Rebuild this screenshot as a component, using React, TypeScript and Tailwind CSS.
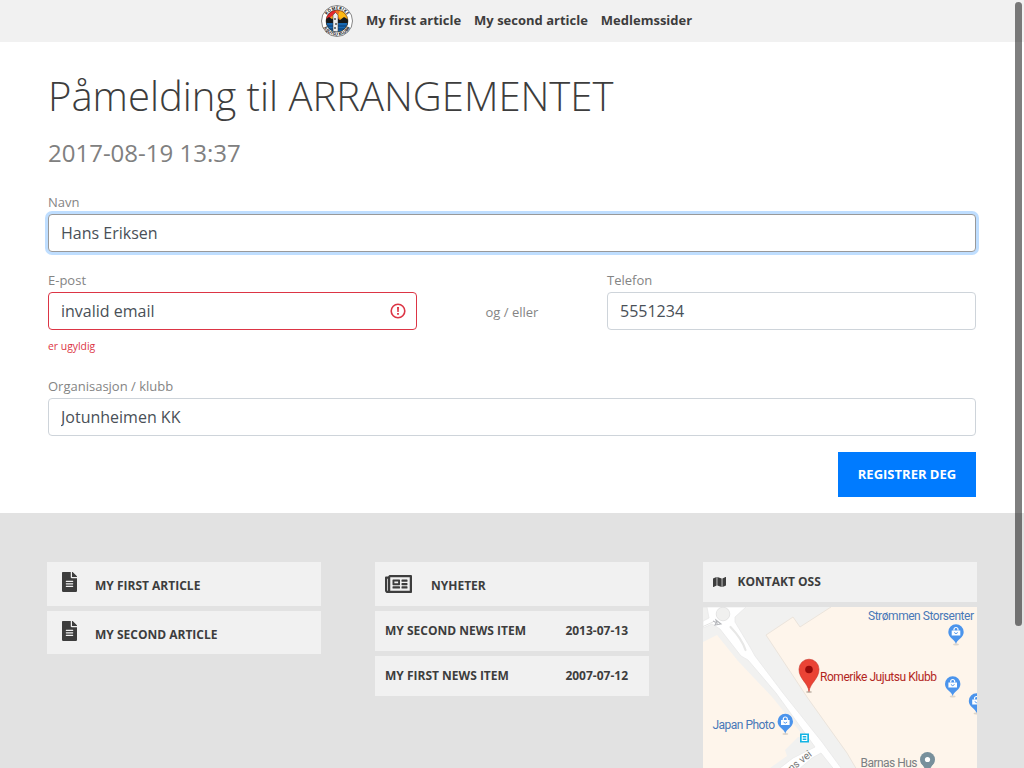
import { FaFileAlt, FaMap, FaRegNewspaper } from "react-icons/fa";

function Logo() {
  return (
    <svg viewBox="0 0 32 32" className="size-8 shrink-0">
      <defs>
        <clipPath id="disc">
          <circle cx="16" cy="16" r="11" />
        </clipPath>
        <path id="upper" d="M4.4 16a11.6 11.6 0 0 1 23.2 0" />
        <path id="lower" d="M1.4 16a14.6 14.6 0 0 0 29.2 0" />
      </defs>
      <circle cx="16" cy="16" r="15.5" fill="#fff" stroke="#555" strokeWidth="0.7" />
      <g clipPath="url(#disc)">
        <rect x="4" y="4" width="24" height="24" fill="#f5a81c" />
        <path d="M4 4h12l-1 4-4 3-7 6z" fill="#e5262b" />
        <path d="M16 16 14 4h5zM16 16 28 6l-1-3-6 1z" fill="#f26a21" />
        <circle cx="21" cy="10" r="3.5" fill="#fdb913" />
        <path d="M4 18V15l4-3 3 2 4-2 4 3 4-3 5 3v5H4z" fill="#15191c" />
        <rect x="4" y="18" width="24" height="10" fill="#1767b1" />
        <path d="M4 21h24M5 24h22" stroke="#0b3b70" strokeWidth="1.2" />
        <path d="M12 10 14.5 7.5 17 10v17h-5z" fill="#eee" stroke="#333" strokeWidth="0.5" />
        <path d="M13 13h2v2h-2zM14 18h2v2h-2zM13 22h2v2h-2z" fill="#777" />
      </g>
      <circle cx="16" cy="16" r="11" fill="none" stroke="#222" strokeWidth="0.5" />
      <g className="font-['Open_Sans',sans-serif] font-bold" fontSize="4.2" fill="#111" textAnchor="middle">
        <text><textPath href="#upper" startOffset="50%" textLength="24">ROMERIKE</textPath></text>
        <text><textPath href="#lower" startOffset="50%">JUJUTSU KLUBB</textPath></text>
      </g>
    </svg>
  );
}

function ShopPin({ x, y }: { x: number; y: number }) {
  return (
    <g transform={`translate(${x} ${y})`}>
      <ellipse cx="0" cy="12.5" rx="3" ry="1" fill="#b9b3aa" opacity="0.5" />
      <path d="M0 12C-1 7.5-7.7 6-7.7 0a7.7 7.7 0 0 1 15.4 0C7.7 6 1 7.5 0 12z" fill="#4b94ec" />
      <path d="M-4.3-1.5h8.6v5h-8.6z" fill="#fff" />
      <path d="M-2-1.5v-1a2 2 0 0 1 4 0v1" fill="none" stroke="#fff" strokeWidth="1.2" />
      <path d="M-1.8.5q1.8 2.4 3.6 0" fill="none" stroke="#4b94ec" strokeWidth="1" />
    </g>
  );
}

function Map() {
  return (
    <svg width="274" height="180" viewBox="0 0 274 180" className="block shrink-0 font-['Roboto',sans-serif] font-normal" fontSize="12">
      <rect width="274" height="180" fill="#fef5eb" />
      <path d="M0 0H128L97 20 90 10 63 28 104 90 144 146 164 180H52L67 161 84 149 82 143 95 130 102 131 70 91 35 54 14 28 0 35z" fill="#f1f1f0" />
      <path d="M128 0 97 20 90 10 63 28 104 90 144 146 164 180" fill="none" stroke="#ebe4dc" strokeWidth="1" />
      <path
        d="M0 0H43L32 10V15L47 40 52 49 80 86 119 135 152 180H145L118 146 109 151 75 180H53L77 161 90 151 112 140 73 86 45 53 38 49 17 22 9 17 0 21V14L6 11 4 0z"
        fill="#fff"
        stroke="#e9e9e8"
        strokeWidth="0.8"
      />
      <circle cx="20" cy="7" r="6.8" fill="#f0f0ef" stroke="#e0e0df" strokeWidth="0.8" />
      <path d="M27.5 20Q39 32 42.5 43" fill="none" stroke="#e8e8e7" strokeWidth="2.2" strokeLinecap="round" />
      <path d="m10 14 4 2-1-3 5 4-6 1 1-2" fill="none" stroke="#b5b7bb" strokeWidth="1.1" />
      <path d="M0 19.5 10 15" fill="none" stroke="#dededd" strokeWidth="0.8" />
      <text x="165" y="13.2" fill="#4878b8" textLength="106">Strømmen Storsenter</text>
      <ShopPin x={253} y={25} />
      <ShopPin x={249.7} y={77} />
      <ShopPin x={273.5} y={94} />
      <ShopPin x={82.3} y={114.5} />
      <text x="9.5" y="122.3" fill="#4878b8" textLength="62.5">Japan Photo</text>
      <ellipse cx="106" cy="85" rx="3" ry="1" fill="#c6b9ad" />
      <path d="M106 84.5C105 76 96 72 96 62.2a10 10 0 0 1 20 0c0 9.8-9 13.8-10 22.3z" fill="#ea4335" stroke="#c83126" strokeWidth="0.6" />
      <circle cx="106" cy="62.5" r="3.8" fill="#960a0a" />
      <text x="117" y="74.3" fill="#b3261e" textLength="117">Romerike Jujutsu Klubb</text>
      <rect x="97" y="126.5" width="9" height="9" fill="#14b4e4" />
      <rect x="99.2" y="128.5" width="4.6" height="5" fill="none" stroke="#fff" strokeWidth="1" />
      <path d="M99 131h5" stroke="#fff" />
      <text x="157.5" y="160" fill="#7b8083" textLength="57">Barnas Hus</text>
      <circle cx="224.5" cy="152.5" r="7.5" fill="#78909c" />
      <path d="M219 157h11l-5.5 9z" fill="#78909c" />
      <circle cx="224.5" cy="152.5" r="2.6" fill="#fff" />
      <text transform="translate(84 168.5) rotate(-38)" fill="#777" fontSize="10.5">ens vei</text>
    </svg>
  );
}

const fieldClass = "block h-[38px] w-full rounded border bg-white px-3 text-[16px] text-[#495057] outline-none";
const labelClass = "block h-[21px] text-[13px] leading-[20px] text-[#848484]";

export default function App() {
  return (
    <div className="relative h-[768px] w-[1024px] overflow-hidden bg-white font-['Open_Sans',sans-serif] text-[#3d3d3d]">
      <header className="flex h-[42px] items-center bg-[#f1f1f1] pl-[321px] text-[13px] font-bold">
        <Logo />
        <nav className="flex gap-[13px] pl-[13px]">
          <a>My first article</a>
          <a>My second article</a>
          <a>Medlemssider</a>
        </nav>
      </header>

      <main className="h-[471px] px-12 pt-[30px]">
        <h1 className="text-[40px] leading-[48px] font-light">Påmelding til ARRANGEMENTET</h1>
        <p className="mt-[18px] text-[24px] leading-[29px] text-[#808080]">2017-08-19 13:37</p>
        <form className="mt-[25px]">
          <label className={labelClass}>Navn</label>
          <input className={`${fieldClass} mt-[1px] border-[#999] shadow-[0_0_0_3px_#bfdeff]`} defaultValue="Hans Eriksen" />

          <div className="mt-[18px] flex h-[106px] justify-between">
            <div className="w-[369px]">
              <label className={labelClass}>E-post</label>
              <div className="relative mt-[1px]">
                <input className={`${fieldClass} border-[#dc3545]`} defaultValue="invalid email" />
                <svg className="absolute top-[11px] right-[11px] size-4" viewBox="0 0 16 16">
                  <circle cx="8" cy="8" r="6.8" fill="none" stroke="#dc3545" strokeWidth="1.6" />
                  <path d="M7 4h2l-.3 5H7.3zM7.1 10h1.8v1.8H7.1z" fill="#dc3545" />
                </svg>
              </div>
              <p className="mt-2 text-[10.4px] leading-4 text-[#dc3545]">er ugyldig</p>
            </div>
            <span className="pt-[32px] text-[13px] leading-5 text-[#848484]">og / eller</span>
            <div className="w-[369px]">
              <label className={labelClass}>Telefon</label>
              <input className={`${fieldClass} mt-[1px] border-[#ced4da]`} defaultValue="5551234" />
            </div>
          </div>

          <label className={labelClass}>Organisasjon / klubb</label>
          <input className={`${fieldClass} mt-[1px] border-[#ced4da]`} defaultValue="Jotunheimen KK" />
          <div className="mt-4 flex justify-end">
            <button type="button" className="h-[45px] w-[138px] bg-[#007bff] text-[13px] font-bold text-white">REGISTRER DEG</button>
          </div>
        </form>
      </main>

      <footer className="flex h-[255px] gap-[54px] bg-[#e2e2e2] pt-[49px] pl-[47px] text-[12px] leading-[18px] font-bold">
        <section className="flex w-[274px] flex-col gap-[5px]">
          <a className="flex h-[44px] bg-[#f1f1f1] pt-[10px] pl-[15px]">
            <FaFileAlt className="h-5 w-[15px]" />
            <span className="pt-[5px] pl-[18px]">MY FIRST ARTICLE</span>
          </a>
          <a className="flex h-[43px] bg-[#f1f1f1] pt-[10px] pl-[15px]">
            <FaFileAlt className="h-5 w-[15px]" />
            <span className="pt-[5px] pl-[18px]">MY SECOND ARTICLE</span>
          </a>
        </section>
        <section className="flex w-[274px] flex-col gap-[5px]">
          <a className="flex h-[44px] bg-[#f1f1f1] pt-[10px] pl-[10px]">
            <FaRegNewspaper className="h-6 w-[27px]" />
            <span className="pt-[5px] pl-[19px]">NYHETER</span>
          </a>
          <a className="flex h-[40px] items-center justify-between bg-[#f1f1f1] pr-[21px] pl-[10px]">
            <span>MY SECOND NEWS ITEM</span>
            <span>2013-07-13</span>
          </a>
          <a className="flex h-[40px] items-center justify-between bg-[#f1f1f1] pr-[21px] pl-[10px]">
            <span>MY FIRST NEWS ITEM</span>
            <span>2007-07-12</span>
          </a>
        </section>
        <section className="flex w-[274px] flex-col gap-[5px]">
          <a className="flex h-[40px] shrink-0 items-center bg-[#f1f1f1] pl-[10px]">
            <FaMap className="h-3 w-[13px]" />
            <span className="pl-[11.5px]">KONTAKT OSS</span>
          </a>
          <Map />
        </section>
      </footer>

      <div className="absolute top-[2px] right-[2px] h-[624px] w-[7px] rounded-full bg-black/50" />
    </div>
  );
}
